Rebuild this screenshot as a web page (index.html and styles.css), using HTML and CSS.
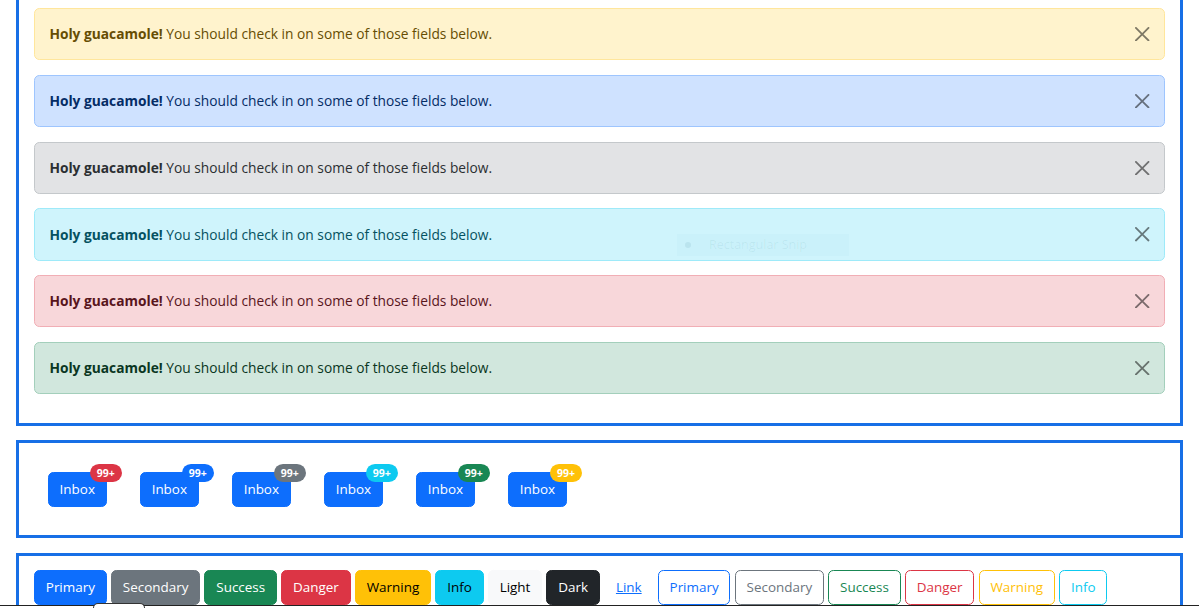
FILE: index.html
```html
<!DOCTYPE html>
<html lang="en">
<head>
<meta charset="utf-8">
<title>Alerts, badges and buttons</title>
<link rel="stylesheet" href="styles.css">
</head>
<body>
<div class="page">
  <section class="box box-alerts">
    <div class="alert alert-warning"><strong>Holy guacamole!</strong> You should check in on some of those fields below.<button class="btn-close" aria-label="Close"><svg viewBox="0 0 16 16"><path d="M.293.293a1 1 0 0 1 1.414 0L8 6.586 14.293.293a1 1 0 1 1 1.414 1.414L9.414 8l6.293 6.293a1 1 0 0 1-1.414 1.414L8 9.414l-6.293 6.293a1 1 0 0 1-1.414-1.414L6.586 8 .293 1.707a1 1 0 0 1 0-1.414z"/></svg></button></div>
    <div class="alert alert-primary"><strong>Holy guacamole!</strong> You should check in on some of those fields below.<button class="btn-close" aria-label="Close"><svg viewBox="0 0 16 16"><path d="M.293.293a1 1 0 0 1 1.414 0L8 6.586 14.293.293a1 1 0 1 1 1.414 1.414L9.414 8l6.293 6.293a1 1 0 0 1-1.414 1.414L8 9.414l-6.293 6.293a1 1 0 0 1-1.414-1.414L6.586 8 .293 1.707a1 1 0 0 1 0-1.414z"/></svg></button></div>
    <div class="alert alert-secondary"><strong>Holy guacamole!</strong> You should check in on some of those fields below.<button class="btn-close" aria-label="Close"><svg viewBox="0 0 16 16"><path d="M.293.293a1 1 0 0 1 1.414 0L8 6.586 14.293.293a1 1 0 1 1 1.414 1.414L9.414 8l6.293 6.293a1 1 0 0 1-1.414 1.414L8 9.414l-6.293 6.293a1 1 0 0 1-1.414-1.414L6.586 8 .293 1.707a1 1 0 0 1 0-1.414z"/></svg></button></div>
    <div class="alert alert-info"><strong>Holy guacamole!</strong> You should check in on some of those fields below.<button class="btn-close" aria-label="Close"><svg viewBox="0 0 16 16"><path d="M.293.293a1 1 0 0 1 1.414 0L8 6.586 14.293.293a1 1 0 1 1 1.414 1.414L9.414 8l6.293 6.293a1 1 0 0 1-1.414 1.414L8 9.414l-6.293 6.293a1 1 0 0 1-1.414-1.414L6.586 8 .293 1.707a1 1 0 0 1 0-1.414z"/></svg></button></div>
    <div class="alert alert-danger"><strong>Holy guacamole!</strong> You should check in on some of those fields below.<button class="btn-close" aria-label="Close"><svg viewBox="0 0 16 16"><path d="M.293.293a1 1 0 0 1 1.414 0L8 6.586 14.293.293a1 1 0 1 1 1.414 1.414L9.414 8l6.293 6.293a1 1 0 0 1-1.414 1.414L8 9.414l-6.293 6.293a1 1 0 0 1-1.414-1.414L6.586 8 .293 1.707a1 1 0 0 1 0-1.414z"/></svg></button></div>
    <div class="alert alert-success"><strong>Holy guacamole!</strong> You should check in on some of those fields below.<button class="btn-close" aria-label="Close"><svg viewBox="0 0 16 16"><path d="M.293.293a1 1 0 0 1 1.414 0L8 6.586 14.293.293a1 1 0 1 1 1.414 1.414L9.414 8l6.293 6.293a1 1 0 0 1-1.414 1.414L8 9.414l-6.293 6.293a1 1 0 0 1-1.414-1.414L6.586 8 .293 1.707a1 1 0 0 1 0-1.414z"/></svg></button></div>
  </section>

  <section class="box box-badges">
    <button class="btn btn-primary inbox">Inbox<span class="badge bg-danger">99+</span></button>
    <button class="btn btn-primary inbox">Inbox<span class="badge bg-primary">99+</span></button>
    <button class="btn btn-primary inbox">Inbox<span class="badge bg-secondary">99+</span></button>
    <button class="btn btn-primary inbox">Inbox<span class="badge bg-info">99+</span></button>
    <button class="btn btn-primary inbox">Inbox<span class="badge bg-success">99+</span></button>
    <button class="btn btn-primary inbox">Inbox<span class="badge bg-warning">99+</span></button>
  </section>

  <section class="box box-buttons">
    <button class="btn btn-primary">Primary</button>
    <button class="btn btn-secondary">Secondary</button>
    <button class="btn btn-success">Success</button>
    <button class="btn btn-danger">Danger</button>
    <button class="btn btn-warning">Warning</button>
    <button class="btn btn-info">Info</button>
    <button class="btn btn-light">Light</button>
    <button class="btn btn-dark">Dark</button>
    <button class="btn btn-link">Link</button>
    <button class="btn btn-outline-primary">Primary</button>
    <button class="btn btn-outline-secondary">Secondary</button>
    <button class="btn btn-outline-success">Success</button>
    <button class="btn btn-outline-danger">Danger</button>
    <button class="btn btn-outline-warning">Warning</button>
    <button class="btn btn-outline-info">Info</button>
  </section>
</div>

<div class="snip-hint"><span class="snip-icon"></span><span class="snip-label">Rectangular Snip</span></div>
<div class="screen-edge"><span class="screen-tab"></span></div>
</body>
</html>
```

FILE: styles.css
```css
* { box-sizing: border-box; }

html, body {
  margin: 0;
  padding: 0;
  background: #fff;
  overflow: hidden;
}

body {
  font-family: "Open Sans", "Noto Sans", sans-serif;
  font-size: 13.75px;
  line-height: 21.6px;
  color: #212529;
}

.page {
  margin-top: -9.4px;
  padding: 0 16px;
  display: flex;
  flex-direction: column;
  gap: 14.4px;
}

.box {
  border: 3px solid #176fe6;
}

/* ---------- Alerts ---------- */
.box-alerts {
  padding: 14.4px 14.8px 14.4px 15px;
}

.alert {
  position: relative;
  padding: 14.4px 43.2px 14.4px 14.4px;
  margin-bottom: 14.4px;
  border: 1px solid transparent;
  border-radius: 5.4px;
}

.alert strong { font-weight: 700; }

.alert-warning   { background: #fff3cd; border-color: #ffe69c; color: #664d03; }
.alert-primary   { background: #cfe2ff; border-color: #9ec5fe; color: #052c65; }
.alert-secondary { background: #e2e3e5; border-color: #c4c8cb; color: #2b2f32; }
.alert-info      { background: #cff4fc; border-color: #9eeaf9; color: #055160; }
.alert-danger    { background: #f8d7da; border-color: #f1aeb5; color: #58151c; }
.alert-success   { background: #d1e7dd; border-color: #a3cfbb; color: #0a3622; }

.btn-close {
  position: absolute;
  top: 0;
  right: 0;
  padding: 18px 14.4px;
  border: 0;
  background: transparent;
  display: flex;
  cursor: pointer;
}

.btn-close svg {
  width: 14.4px;
  height: 14.4px;
  fill: #000;
  opacity: 0.5;
}

/* ---------- Buttons ---------- */
.btn {
  display: inline-block;
  font-family: inherit;
  font-size: 13.45px;
  line-height: 21.6px;
  font-weight: 400;
  padding: 5.4px 10.8px;
  border: 1px solid transparent;
  border-radius: 5.4px;
  background: transparent;
  color: #212529;
  white-space: nowrap;
}

.btn-primary   { background: #0d6efd; border-color: #0d6efd; color: #fff; }
.btn-secondary { background: #6c757d; border-color: #6c757d; color: #fff; }
.btn-success   { background: #198754; border-color: #198754; color: #fff; }
.btn-danger    { background: #dc3545; border-color: #dc3545; color: #fff; }
.btn-warning   { background: #ffc107; border-color: #ffc107; color: #000; }
.btn-info      { background: #0dcaf0; border-color: #0dcaf0; color: #000; }
.btn-light     { background: #f8f9fa; border-color: #f8f9fa; color: #000; }
.btn-dark      { background: #212529; border-color: #212529; color: #fff; }
.btn-link      { color: #0d6efd; text-decoration: underline; }

.btn-outline-primary   { border-color: #0d6efd; color: #0d6efd; }
.btn-outline-secondary { border-color: #6c757d; color: #6c757d; }
.btn-outline-success   { border-color: #198754; color: #198754; }
.btn-outline-danger    { border-color: #dc3545; color: #dc3545; }
.btn-outline-warning   { border-color: #ffc107; color: #ffc107; }
.btn-outline-info      { border-color: #0dcaf0; color: #0dcaf0; }

/* ---------- Badges box ---------- */
.box-badges {
  display: flex;
  align-items: flex-start;
  gap: 33.1px;
  padding: 28.8px;
}

.inbox { position: relative; }

.badge {
  position: absolute;
  top: 0;
  left: 100%;
  transform: translate(-50%, -50%);
  padding: 3.8px 7px;
  font-size: 10.5px;
  line-height: 1;
  font-weight: 700;
  color: #fff;
  border-radius: 50rem;
  white-space: nowrap;
}

.bg-danger    { background: #dc3545; }
.bg-primary   { background: #0d6efd; }
.bg-secondary { background: #6c757d; }
.bg-info      { background: #0dcaf0; }
.bg-success   { background: #198754; }
.bg-warning   { background: #ffc107; }

/* ---------- Buttons box ---------- */
.box-buttons {
  display: flex;
  flex-wrap: wrap;
  align-items: flex-start;
  gap: 4.3px;
  padding: 14.4px 14.4px 14.4px 15px;
  min-height: 120px;
}

/* ---------- Screen artefacts ---------- */
.snip-hint {
  position: absolute;
  left: 677px;
  top: 234px;
  width: 172px;
  height: 22px;
  display: flex;
  align-items: center;
  gap: 18px;
  padding-left: 8px;
  background: rgba(0, 90, 140, 0.02);
  font-size: 12.5px;
  color: rgba(5, 81, 96, 0.07);
}

.snip-icon {
  width: 6px;
  height: 6px;
  background: rgba(5, 81, 96, 0.08);
  border-radius: 50%;
}

.screen-edge {
  position: absolute;
  left: 0;
  top: 605px;
  width: 100%;
  height: 3px;
  border-top: 1px solid #222;
  background: #fff;
}

.screen-tab {
  position: absolute;
  left: 93px;
  top: -3px;
  width: 52px;
  height: 5px;
  background: #fff;
  border: 1px solid #333;
  border-bottom: 0;
  border-radius: 6px 6px 0 0;
}
```
